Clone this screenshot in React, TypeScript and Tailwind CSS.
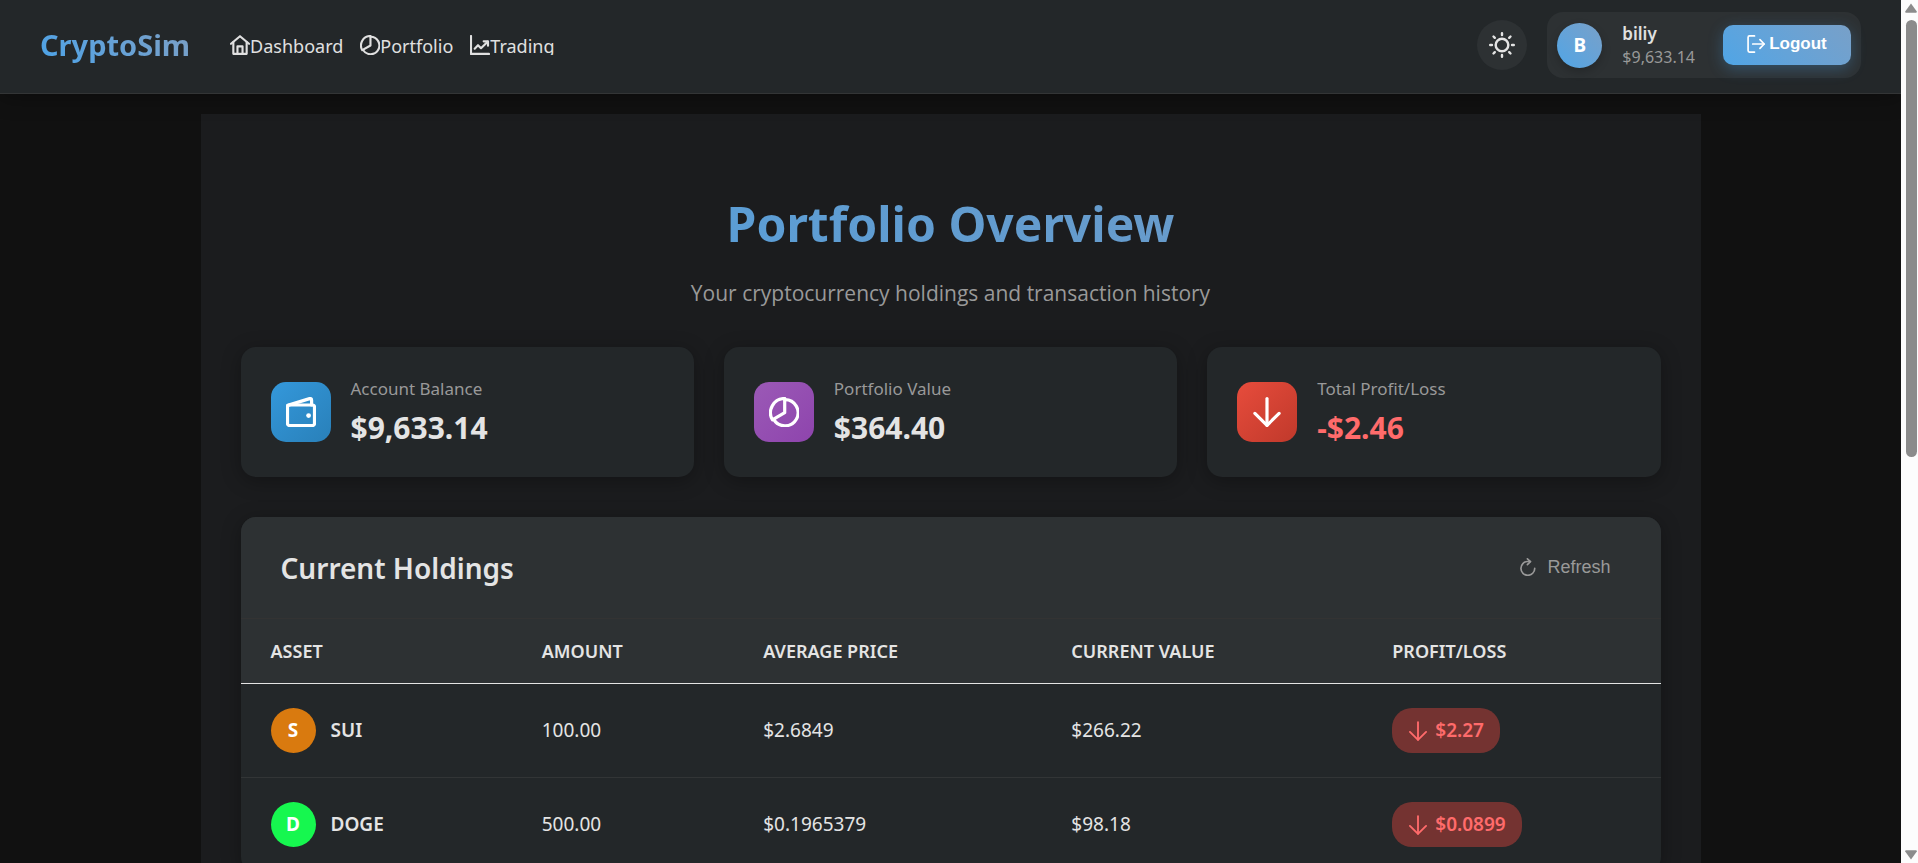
import type { ReactNode } from "react";

type IconProps = { className?: string; weight?: number; children: ReactNode };

function Icon({ className = "", weight = 3.2, children }: IconProps) {
  return (
    <svg
      viewBox="0 0 30 30"
      fill="none"
      stroke="currentColor"
      strokeWidth={weight}
      strokeLinecap="round"
      strokeLinejoin="round"
      aria-hidden="true"
      className={`shrink-0 ${className}`}
    >
      {children}
    </svg>
  );
}

const homeShape = (
  <>
    <path d="M1.5 13.2 15 1.8l13.5 11.4" />
    <path d="M5 10.5V28.3H25V10.5" />
    <path d="M11.2 28V17H18.8V28" />
  </>
);

const pieShape = (
  <>
    <path d="M15.7 1.5V15.7L3.4 22.8A14.2 14.2 0 0 1 15.7 1.5Z" />
    <path d="M16 2.6A13.1 13.1 0 1 1 4.7 22.4" />
  </>
);

const chartShape = (
  <>
    <path d="M1.5 1.5V28.4H28.5" />
    <path d="M7 20.5 12 15.3 16.5 19.8 26.5 10" />
    <path d="M20.5 9.5H27V16" />
  </>
);

const walletShape = (
  <>
    <rect x="1.5" y="8" width="27" height="20.5" rx="2" />
    <path d="M1.7 8.4 23.6 1.6Q25.6 1.2 25.6 3.2V8" />
    <circle cx="22.6" cy="18.6" r="2.4" fill="currentColor" stroke="none" />
  </>
);

const arrowDownShape = (
  <>
    <path d="M15 1.6V28.3" />
    <path d="M2.9 16.4 15 28.3 27.1 16.4" />
  </>
);

const sunShape = (
  <>
    <circle cx="15" cy="15" r="7.3" />
    <path d="M15 1.4V3.4M15 26.6V28.6M1.4 15H3.4M26.6 15H28.6M5.2 5.2 6.7 6.7M23.3 23.3 24.8 24.8M5.2 24.8 6.7 23.3M23.3 6.7 24.8 5.2" />
  </>
);

const logoutShape = (
  <>
    <path d="M12.5 1.6H4.2Q1.8 1.6 1.8 4V26Q1.8 28.4 4.2 28.4H12.5" />
    <path d="M9.5 15H28.4" />
    <path d="M21.6 7.8 28.6 15 21.6 22.2" />
  </>
);

const refreshShape = (
  <>
    <path d="M26.2 17.3A11.5 11.5 0 1 1 14.5 5.8H19" />
    <path d="M14 1.4 19.1 6 14 11" />
  </>
);

const navLinks = [
  { label: "Dashboard", shape: homeShape },
  { label: "Portfolio", shape: pieShape },
  { label: "Trading", shape: chartShape },
];

const stats = [
  {
    label: "Account Balance",
    value: "$9,633.14",
    shape: walletShape,
    tile: "from-[#3498db] to-[#2980b9]",
    tone: "text-[#e4e4e4]",
  },
  {
    label: "Portfolio Value",
    value: "$364.40",
    shape: pieShape,
    tile: "from-[#9b59b6] to-[#8e44ad]",
    tone: "text-[#e4e4e4]",
  },
  {
    label: "Total Profit/Loss",
    value: "-$2.46",
    shape: arrowDownShape,
    tile: "from-[#e74c3c] to-[#c0392b]",
    tone: "text-[#ff6b6b]",
  },
];

const columns = [
  { label: "Asset", width: "w-[19.1%]" },
  { label: "Amount", width: "w-[15.6%]" },
  { label: "Average Price", width: "w-[21.7%]" },
  { label: "Current Value", width: "w-[22.6%]" },
  { label: "Profit/Loss", width: "w-[21%]" },
];

const holdings = [
  { symbol: "SUI", color: "bg-[#d97a0f]", amount: "100.00", average: "$2.6849", value: "$266.22", change: "$2.27" },
  { symbol: "DOGE", color: "bg-[#16f74f]", amount: "500.00", average: "$0.1965379", value: "$98.18", change: "$0.0899" },
];

function Header() {
  return (
    <header className="relative z-10 flex h-[94px] shrink-0 items-center justify-between border-b border-[#333536] bg-[#232729] px-10 pb-[3px] shadow-[0_4px_20px_rgba(0,0,0,0.3)]">
      <div className="flex items-center gap-10">
        <a
          href="#home"
          className="bg-linear-45 from-[#4aa3e8] to-[#7c9fc4] bg-clip-text text-[29px] leading-10 font-bold text-transparent"
        >
          CryptoSim
        </a>
        <nav className="flex gap-[17px]">
          {navLinks.map(({ label, shape }) => (
            <a
              key={label}
              href={`#${label.toLowerCase()}`}
              className="flex h-5 items-start overflow-hidden text-[18px] leading-[22px] text-[#e0e0e0]"
            >
              <Icon className="size-5">{shape}</Icon>
              {label}
            </a>
          ))}
        </nav>
      </div>

      <div className="flex items-center gap-5">
        <button
          type="button"
          aria-label="Toggle theme"
          className="flex size-[50px] items-center justify-center rounded-full bg-[#2d3133] text-[#e4e4e4]"
        >
          <Icon className="size-[26px]" weight={2.8}>{sunShape}</Icon>
        </button>
        <div className="flex h-[66px] items-center rounded-2xl bg-[#2d3133] p-[10px]">
          <div className="flex size-[45px] items-center justify-center rounded-full bg-linear-45 from-[#4fa5e6] to-[#78a0c8] text-[19px] font-bold text-white shadow-[0_4px_10px_rgba(0,0,0,0.2)]">
            B
          </div>
          <div className="mr-7 ml-5 flex flex-col">
            <span className="text-[17px] leading-6 font-semibold text-[#e0e0e0]">biliy</span>
            <span className="text-[16px] leading-[22px] text-[#999999]">$9,633.14</span>
          </div>
          <button
            type="button"
            className="flex h-10 w-32 items-center justify-center gap-1 rounded-[10px] bg-linear-45 from-[#4fa5e6] to-[#78a0c8] pb-[2px] font-['Liberation_Sans',sans-serif] text-[17px] font-bold text-white shadow-[0_4px_15px_rgba(74,163,232,0.3)]"
          >
            <Icon className="size-[18px]" weight={2.8}>{logoutShape}</Icon>
            Logout
          </button>
        </div>
      </div>
    </header>
  );
}

function StatCard({ label, value, shape, tile, tone }: (typeof stats)[number]) {
  return (
    <div className="flex items-center gap-5 rounded-[15px] bg-[#232729] px-[30px] py-[26px] shadow-[0_4px_20px_rgba(0,0,0,0.3)]">
      <div className={`flex size-[60px] shrink-0 items-center justify-center rounded-[15px] bg-linear-135 text-white ${tile}`}>
        <Icon className="size-[30px]">{shape}</Icon>
      </div>
      <div>
        <div className="text-[17px] leading-8 text-[#999999]">{label}</div>
        <div className={`text-[30px] leading-[46px] font-bold ${tone}`}>{value}</div>
      </div>
    </div>
  );
}

function Holdings() {
  return (
    <section className="mt-10 overflow-hidden rounded-[15px] bg-[#232729] shadow-[0_4px_20px_rgba(0,0,0,0.3)]">
      <div className="flex h-[102px] items-center justify-between border-b border-[#333333] bg-[#2d3133] px-10">
        <h2 className="text-[28px] leading-10 font-semibold text-[#e4e4e4]">Current Holdings</h2>
        <button
          type="button"
          className="flex items-center gap-[10px] px-[10px] pb-[2px] font-['Liberation_Sans',sans-serif] text-[18px] leading-6 text-[#999999]"
        >
          <Icon className="size-[18px]" weight={2.8}>{refreshShape}</Icon>
          Refresh
        </button>
      </div>
      <table className="w-full table-fixed border-separate border-spacing-0 text-left text-[#e4e4e4]">
        <thead>
          <tr>
            {columns.map(({ label, width }) => (
              <th
                key={label}
                scope="col"
                className={`h-[65px] border-b border-[#e4e4e4] bg-[#2d3133] px-[30px] py-0 text-[18px] font-semibold uppercase ${width}`}
              >
                {label}
              </th>
            ))}
          </tr>
        </thead>
        <tbody className="text-[19px] [&_td]:h-[94px] [&_td]:border-b [&_td]:border-[#323536] [&_td]:px-[30px] [&_td]:py-0 [&_tr:last-child_td]:border-transparent">
          {holdings.map((row) => (
            <tr key={row.symbol}>
              <td>
                <div className="flex items-center gap-[15px] font-semibold">
                  <span className={`flex size-[45px] items-center justify-center rounded-full font-bold text-white ${row.color}`}>
                    {row.symbol[0]}
                  </span>
                  {row.symbol}
                </div>
              </td>
              <td>{row.amount}</td>
              <td>{row.average}</td>
              <td>{row.value}</td>
              <td>
                <div className="flex h-[45px] w-fit items-center gap-[7px] rounded-[20px] bg-[#743331] px-4 font-semibold text-[#ff6b6b]">
                  <Icon className="size-5" weight={2.8}>{arrowDownShape}</Icon>
                  {row.change}
                </div>
              </td>
            </tr>
          ))}
        </tbody>
      </table>
    </section>
  );
}

function ScrollTrack() {
  return (
    <div aria-hidden="true" className="flex w-[17px] shrink-0 flex-col items-center bg-[#fcfcfc] py-[3px] pl-[3px] text-[#8b8b8b]">
      <svg viewBox="0 0 12 10" className="h-[10px] w-3" fill="currentColor">
        <path d="M6 .4 11.8 8.4Q12 9.8 10.8 9.8H1.2Q0 9.8.2 8.4Z" />
      </svg>
      <div className="mt-[7px] mb-auto h-[51%] w-[11px] rounded-full bg-[#8b8b8b]" />
      <svg viewBox="0 0 12 10" className="h-[10px] w-3" fill="currentColor">
        <path d="M6 9.6.2 1.6Q0 .2 1.2.2H10.8Q12 .2 11.8 1.6Z" />
      </svg>
    </div>
  );
}

export default function App() {
  return (
    <div className="flex h-screen bg-[#111111] font-['Noto_Sans','Open_Sans',sans-serif]">
      <div className="flex min-w-0 flex-1 flex-col overflow-hidden">
        <Header />
        <main className="mx-auto mt-5 w-full max-w-[1500px] flex-1 shrink-0 bg-[#1b1c1e] px-10 pt-20 pb-10">
          <h1 className="bg-linear-45 from-[#4a9fe0] to-[#7499c0] bg-clip-text text-center text-[48px] leading-[60px] font-bold text-transparent">
            Portfolio Overview
          </h1>
          <p className="mt-[23px] text-center font-['Open_Sans','Noto_Sans',sans-serif] text-[21px] leading-8 text-[#999999]">
            Your cryptocurrency holdings and transaction history
          </p>
          <div className="mt-[38px] grid grid-cols-3 gap-[30px]">
            {stats.map((stat) => (
              <StatCard key={stat.label} {...stat} />
            ))}
          </div>
          <Holdings />
        </main>
      </div>
      <ScrollTrack />
    </div>
  );
}
